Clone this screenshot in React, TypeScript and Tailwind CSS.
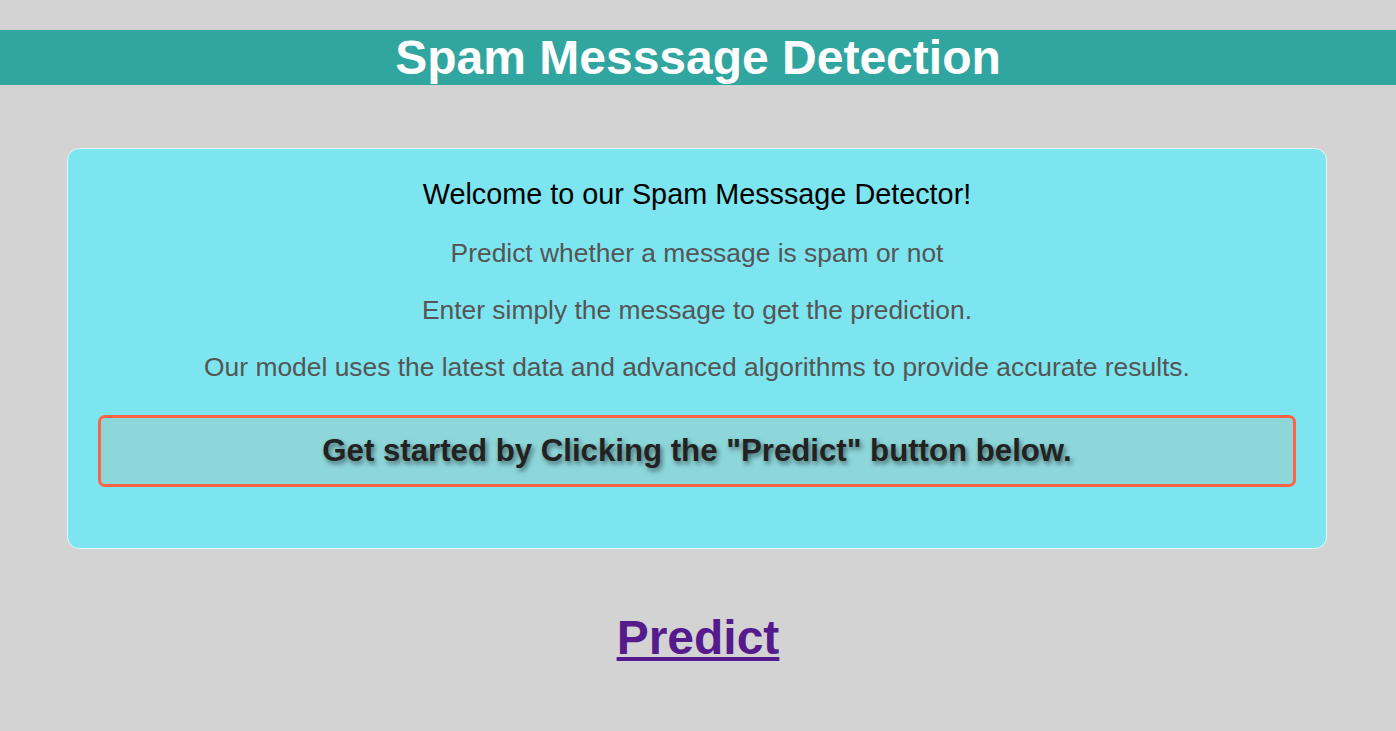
import React from "react";

export default function App() {
  return (
    <div className="min-h-[731px] bg-[#d3d3d3] pt-[30px] pb-[60px] font-['Liberation_Sans',Arial,sans-serif]">
      <header className="bg-[#31a59f]">
        <h1 className="text-center text-[48px] leading-[55px] font-bold text-white">
          Spam Messsage Detection
        </h1>
      </header>
      <section className="ml-[67px] mr-[69px] mt-[63px] rounded-[12px] border border-[#e8f4f6] bg-[#7de5ef] px-[30px] pt-[29px] pb-[61px] text-center">
        <p className="text-[28.8px] leading-[33px] text-black">
          Welcome to our Spam Messsage Detector!
        </p>
        <p className="mt-[27px] text-[26.4px] leading-[30px] text-[#555555]">
          Predict whether a message is spam or not
        </p>
        <p className="mt-[27px] text-[26.4px] leading-[30px] text-[#555555]">
          Enter simply the message to get the prediction.
        </p>
        <p className="mt-[27px] text-[26.4px] leading-[30px] text-[#555555]">
          Our model uses the latest data and advanced algorithms to provide accurate results.
        </p>
        <div className="mt-[33px] flex h-[72px] items-center justify-center rounded-[7px] border-[3px] border-[#ff6347] bg-[#8dd7db]">
          <p className="text-[31.2px] leading-[36px] font-bold text-[#222222] [text-shadow:2px_3px_5px_rgba(0,0,0,0.5)]">
            Get started by Clicking the "Predict" button below.
          </p>
        </div>
      </section>
      <div className="mt-[61px] text-center">
        <a href="#" className="text-[48px] leading-[55px] font-bold text-[#551a8b] underline">
          Predict
        </a>
      </div>
    </div>
  );
}
